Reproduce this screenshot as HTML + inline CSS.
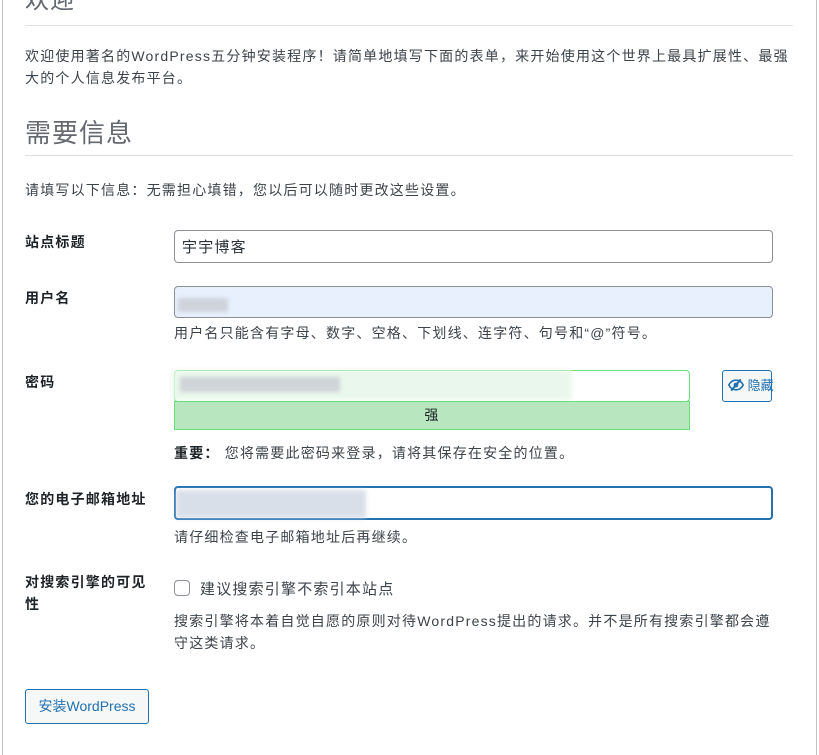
<!DOCTYPE html>
<html><head><meta charset="utf-8"><style>
*{box-sizing:border-box;margin:0;padding:0}
body{width:819px;height:741px;background:#fff;overflow:hidden;position:relative;font-family:"Liberation Sans","Noto Sans CJK SC",sans-serif;color:#3c434a;font-size:14px;letter-spacing:1.2px}
.frame{position:absolute;left:2px;top:-5px;width:815px;height:760px;border-left:1px solid #c3c4c7;border-right:1px solid #c3c4c7}
.a{position:absolute;white-space:nowrap}
.h{font-size:24px;color:#646970;font-weight:400;letter-spacing:1px}
.line{position:absolute;left:25px;width:768px;height:1px;background:#e0e0e0}
.lbl{font-weight:700;color:#1d2327}
.inp{position:absolute;border:1px solid #8c8f94;border-radius:4px;background:#fff}
.blur{position:absolute;background:#c8ccd2;filter:blur(2px);opacity:.8}
</style></head><body>
<div class="frame"></div>
<div class="a h" style="left:25px;top:-14px;line-height:30px">欢迎</div>
<div class="line" style="top:25px"></div>
<div class="a" style="left:25px;top:45px;line-height:22px;white-space:normal;width:775px">欢迎使用著名的WordPress五分钟安装程序！请简单地填写下面的表单，来开始使用这个世界上最具扩展性、最强大的个人信息发布平台。</div>
<div class="a h" style="left:25px;top:117px;font-size:26px;line-height:32px">需要信息</div>
<div class="line" style="top:155px"></div>
<div class="a" style="left:25px;top:179px;line-height:22px">请填写以下信息：无需担心填错，您以后可以随时更改这些设置。</div>

<div class="a lbl" style="left:25px;top:232px">站点标题</div>
<div class="inp" style="left:174px;top:230px;width:599px;height:33px"></div>
<div class="a" style="left:182px;top:236px;font-size:15px;color:#2c3338">宇宇博客</div>

<div class="a lbl" style="left:25px;top:288px">用户名</div>
<div class="inp" style="left:174px;top:286px;width:599px;height:32px;background:#e8f0fe"></div>
<div class="blur" style="left:178px;top:298px;width:50px;height:14px"></div>
<div class="a" style="left:174px;top:323px">用户名只能含有字母、数字、空格、下划线、连字符、句号和“@”符号。</div>

<div class="a lbl" style="left:25px;top:372px">密码</div>
<div class="inp" style="left:174px;top:370px;width:516px;height:32px;border-color:#68de7c"></div>
<div class="blur" style="left:172px;top:370px;width:400px;height:30px;background:#e8f7ea;opacity:.9"></div>
<div class="blur" style="left:180px;top:377px;width:160px;height:15px;background:#c8ccd2"></div>
<div class="a" style="left:174px;top:401px;width:516px;height:29px;background:#b8e6bf;border:1px solid #68de7c;text-align:center;line-height:27px;color:#1d2327">强</div>
<div class="a" style="left:722px;top:370px;width:50px;height:32px;border:1px solid #2271b1;border-radius:3px;background:#f6f7f7;color:#2271b1;font-size:13px;letter-spacing:0;line-height:30px;padding-left:5px">
<svg width="16" height="14" viewBox="0 0 20 16" style="vertical-align:-2px"><path d="M1 8c2-4 5-6 9-6s7 2 9 6c-2 4-5 6-9 6S3 12 1 8z" fill="none" stroke="#2271b1" stroke-width="2"/><circle cx="10" cy="8" r="3" fill="#2271b1"/><path d="M4 15L16 1" stroke="#2271b1" stroke-width="2.5"/></svg> 隐藏</div>
<div class="a" style="left:174px;top:443px"><b style="color:#1d2327">重要：</b> 您将需要此密码来登录，请将其保存在安全的位置。</div>

<div class="a lbl" style="left:25px;top:489px">您的电子邮箱地址</div>
<div class="inp" style="left:174px;top:486px;width:599px;height:34px;border:2px solid #2271b1"></div>
<div class="blur" style="left:176px;top:490px;width:190px;height:28px;background:#d0d8e4"></div>
<div class="a" style="left:174px;top:527px">请仔细检查电子邮箱地址后再继续。</div>

<div class="a lbl" style="left:25px;top:571px;line-height:22px">对搜索引擎的可见<br>性</div>
<div class="a" style="left:174px;top:580px;width:16px;height:16px;border:1px solid #8c8f94;border-radius:4px"></div>
<div class="a" style="left:200px;top:578px;font-size:15px">建议搜索引擎不索引本站点</div>
<div class="a" style="left:174px;top:610px;line-height:22px;white-space:normal;width:610px">搜索引擎将本着自觉自愿的原则对待WordPress提出的请求。并不是所有搜索引擎都会遵守这类请求。</div>

<div class="a" style="left:25px;top:689px;width:124px;height:35px;border:1px solid #2271b1;border-radius:3px;background:#f6f7f7;color:#2271b1;text-align:center;line-height:33px;letter-spacing:0">安装WordPress</div>
</body></html>
